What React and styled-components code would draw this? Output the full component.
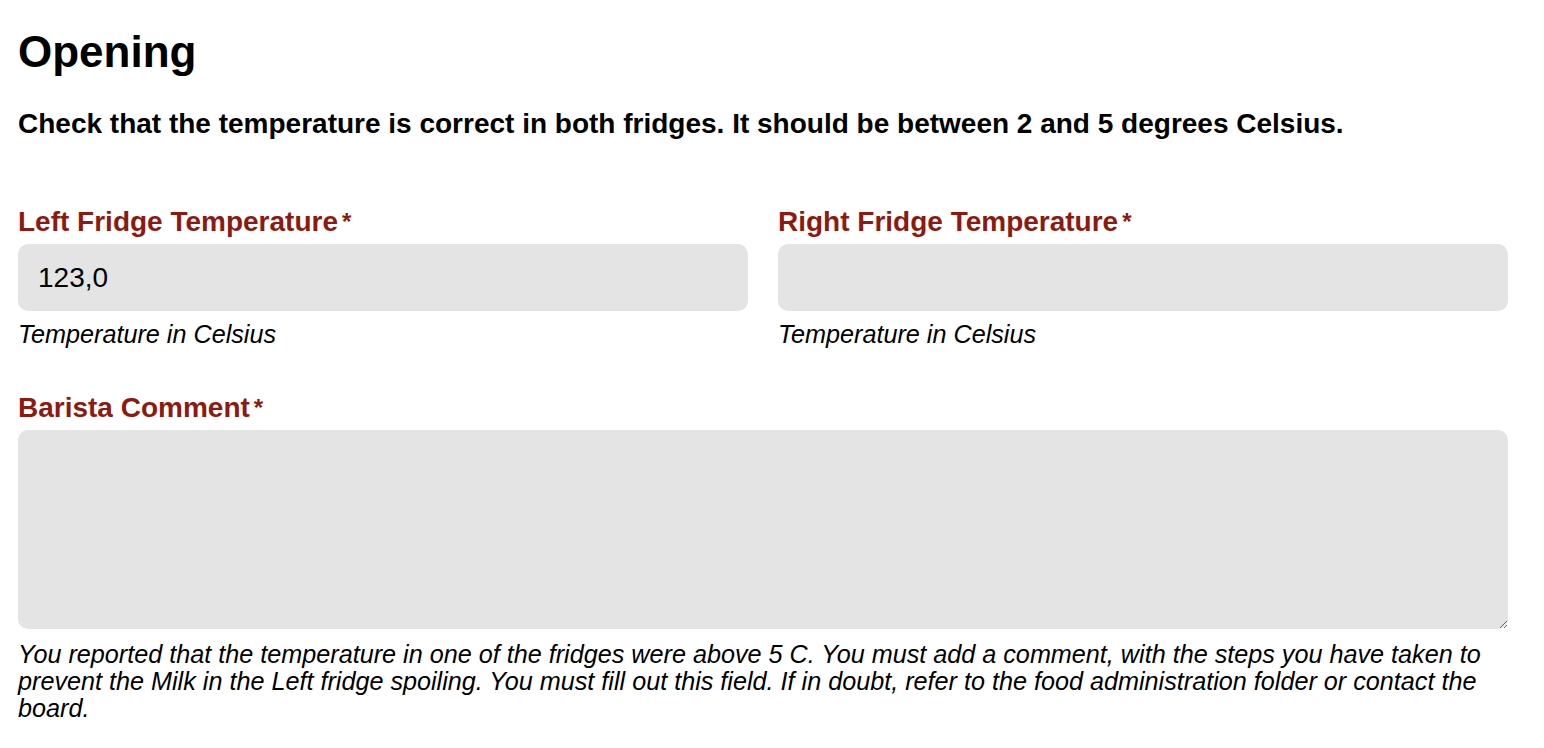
import React from "react";
import styled, { createGlobalStyle } from "styled-components";

const GlobalStyle = createGlobalStyle`
  body {
    margin: 0;
    background: #fff;
    font-family: "Liberation Sans", Arial, Helvetica, sans-serif;
    color: #000;
  }
`;

const Page = styled.div`
  width: 1490px;
  padding: 0 18px;
`;

const Title = styled.h1`
  margin: 24px 0 0;
  font-size: 44px;
  font-weight: 700;
  line-height: 56px;
`;

const Intro = styled.p`
  margin: 28px 0 0;
  font-size: 28px;
  font-weight: 700;
  line-height: 32px;
`;

const Row = styled.div`
  display: grid;
  grid-template-columns: ${(p) => (p.$single ? "1fr" : "1fr 1fr")};
  column-gap: 30px;
  margin-top: ${(p) => p.$top || 0}px;
`;

const Field = styled.div`
  display: flex;
  flex-direction: column;
`;

const Label = styled.label`
  font-size: 28px;
  font-weight: 700;
  line-height: 32px;
  color: #8c1a10;
  margin-bottom: 6px;
`;

const Star = styled.span`
  font-size: 24px;
  margin-left: 4px;
  vertical-align: top;
`;

const Input = styled.input`
  box-sizing: border-box;
  height: 67px;
  border: none;
  border-radius: 10px;
  background: #e4e4e4;
  padding: 0 20px;
  font-family: "Liberation Sans", Arial, sans-serif;
  font-size: 28px;
  color: #000;
  outline: none;
`;

const TextArea = styled.textarea`
  box-sizing: border-box;
  height: 199px;
  border: none;
  border-radius: 10px;
  background: #e4e4e4;
  padding: 14px 20px;
  font-family: "Liberation Sans", Arial, sans-serif;
  font-size: 25px;
  outline: none;
  resize: vertical;
  display: block;
`;

const Help = styled.p`
  margin: ${(p) => p.$gap || 10}px 0 0;
  font-size: 25.2px;
  font-style: italic;
  line-height: 27px;
`;

const Required = ({ children, htmlFor }) => (
  <Label htmlFor={htmlFor}>
    {children}
    <Star>*</Star>
  </Label>
);

export default function App() {
  return (
    <Page>
      <GlobalStyle />
      <Title>Opening</Title>
      <Intro>
        Check that the temperature is correct in both fridges. It should be
        between 2 and 5 degrees Celsius.
      </Intro>

      <Row $top={66}>
        <Field>
          <Required htmlFor="left">Left Fridge Temperature</Required>
          <Input id="left" defaultValue="123,0" />
          <Help>Temperature in Celsius</Help>
        </Field>
        <Field>
          <Required htmlFor="right">Right Fridge Temperature</Required>
          <Input id="right" />
          <Help>Temperature in Celsius</Help>
        </Field>
      </Row>

      <Row $top={44} $single>
        <Field>
          <Required htmlFor="comment">Barista Comment</Required>
          <TextArea id="comment" />
          <Help $gap={12}>
            You reported that the temperature in one of the fridges were above
            5 C. You must add a comment, with the steps you have taken to
            prevent the Milk in the Left fridge spoiling. You must fill out this
            field. If in doubt, refer to the food administration folder or
            contact the board.
          </Help>
        </Field>
      </Row>
    </Page>
  );
}
